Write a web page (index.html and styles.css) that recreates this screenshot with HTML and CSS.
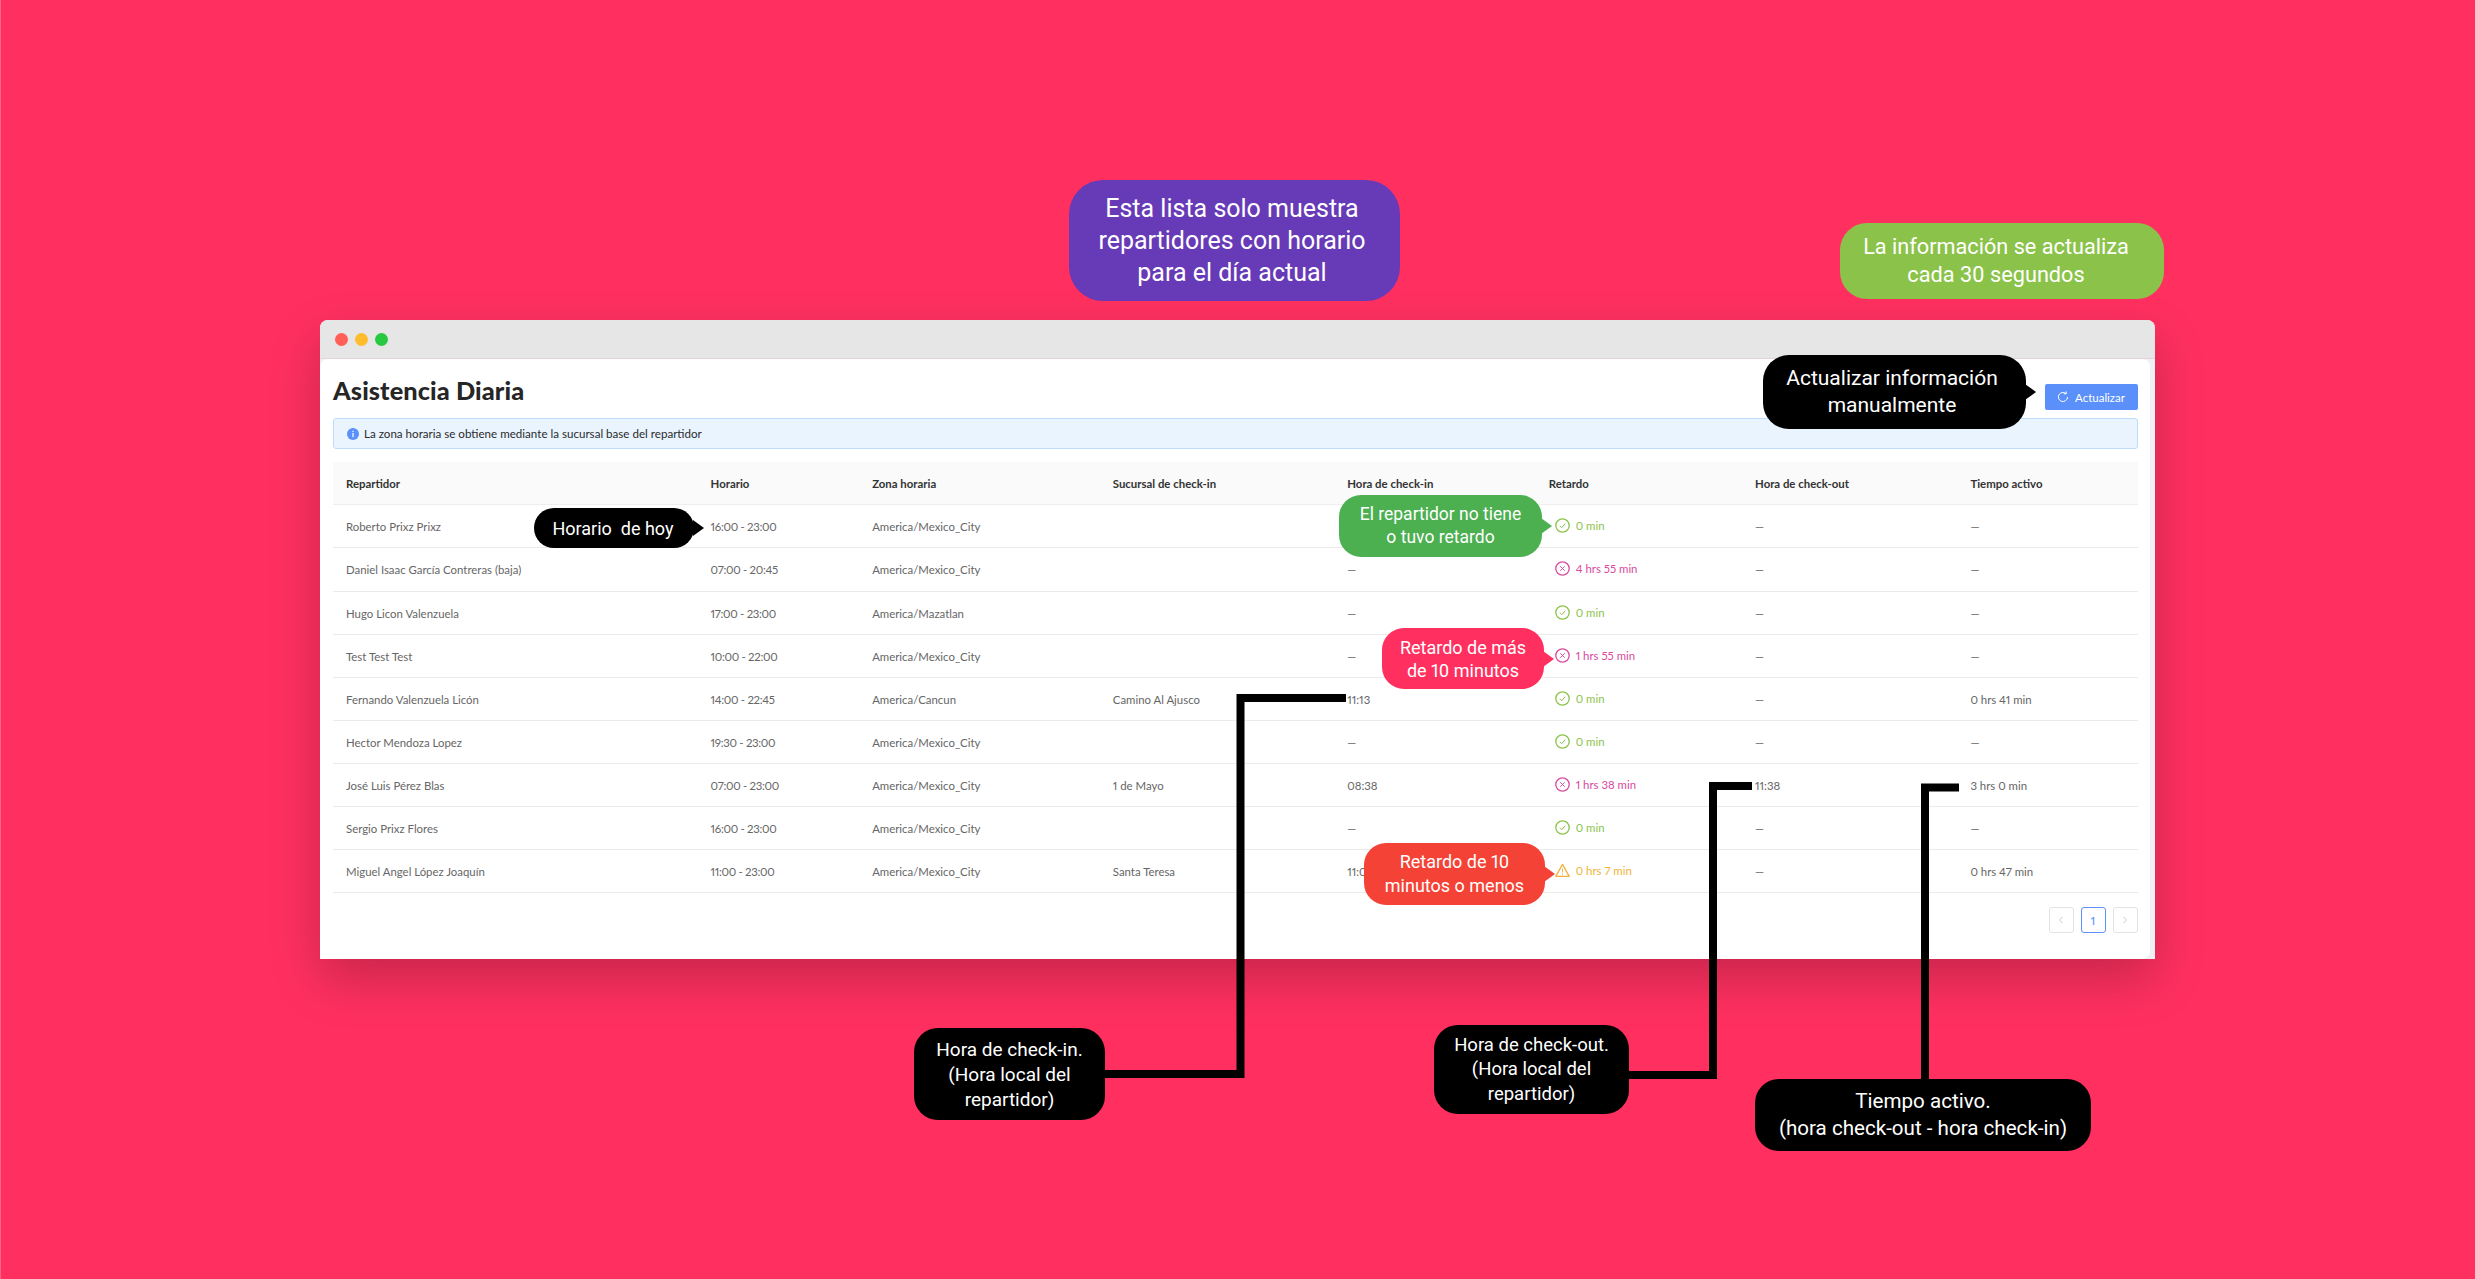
FILE: index.html
```html
<!DOCTYPE html>
<html lang="es">
<head>
  <meta charset="UTF-8">
  <meta name="viewport" content="width=device-width, initial-scale=1.0">
  <title>Asistencia Diaria</title>
  <link rel="stylesheet" href="styles.css">
</head>
<body>
  <div class="window">
    <div class="titlebar">
      <span class="dot dot-red"></span>
      <span class="dot dot-yellow"></span>
      <span class="dot dot-green"></span>
    </div>
    <main class="content">
      <header class="page-head">
        <h1>Asistencia Diaria</h1>
        <button class="refresh" type="button">
          <svg viewBox="0 0 12 12" width="12" height="12" fill="none" stroke="#fff" stroke-width="1" stroke-linecap="round"><path d="M10.6 6.4A4.6 4.6 0 1 1 8.9 2.4"/><path d="M9.2 .8v2h-2"/></svg>
          Actualizar
        </button>
      </header>
      <div class="alert">
        <svg viewBox="0 0 12 12" width="12" height="12"><circle cx="6" cy="6" r="6" fill="#5b8ff9"/><rect x="5.4" y="5" width="1.2" height="4.2" fill="#fff"/><rect x="5.4" y="2.8" width="1.2" height="1.2" fill="#fff"/></svg>
        La zona horaria se obtiene mediante la sucursal base del repartidor
      </div>
      <table class="attendance">
        <colgroup>
          <col class="c1"><col class="c2"><col class="c3"><col class="c4"><col class="c5"><col class="c6"><col class="c7"><col class="c8">
        </colgroup>
        <thead>
          <tr><th>Repartidor</th><th>Horario</th><th>Zona horaria</th><th>Sucursal de check-in</th><th>Hora de check-in</th><th>Retardo</th><th>Hora de check-out</th><th>Tiempo activo</th></tr>
        </thead>
        <tbody>
          <tr><td>Roberto Prixz Prixz</td><td>16:00 - 23:00</td><td>America/Mexico_City</td><td></td><td>—</td>
            <td><span class="late ok"><svg class="ico"><use href="#i-ok"/></svg>0 min</span></td><td>—</td><td>—</td></tr>
          <tr><td>Daniel Isaac García Contreras (baja)</td><td>07:00 - 20:45</td><td>America/Mexico_City</td><td></td><td>—</td>
            <td><span class="late bad"><svg class="ico"><use href="#i-bad"/></svg>4 hrs 55 min</span></td><td>—</td><td>—</td></tr>
          <tr><td>Hugo Licon Valenzuela</td><td>17:00 - 23:00</td><td>America/Mazatlan</td><td></td><td>—</td>
            <td><span class="late ok"><svg class="ico"><use href="#i-ok"/></svg>0 min</span></td><td>—</td><td>—</td></tr>
          <tr><td>Test Test Test</td><td>10:00 - 22:00</td><td>America/Mexico_City</td><td></td><td>—</td>
            <td><span class="late bad"><svg class="ico"><use href="#i-bad"/></svg>1 hrs 55 min</span></td><td>—</td><td>—</td></tr>
          <tr><td>Fernando Valenzuela Licón</td><td>14:00 - 22:45</td><td>America/Cancun</td><td>Camino Al Ajusco</td><td>11:13</td>
            <td><span class="late ok"><svg class="ico"><use href="#i-ok"/></svg>0 min</span></td><td>—</td><td>0 hrs 41 min</td></tr>
          <tr><td>Hector Mendoza Lopez</td><td>19:30 - 23:00</td><td>America/Mexico_City</td><td></td><td>—</td>
            <td><span class="late ok"><svg class="ico"><use href="#i-ok"/></svg>0 min</span></td><td>—</td><td>—</td></tr>
          <tr><td>José Luis Pérez Blas</td><td>07:00 - 23:00</td><td>America/Mexico_City</td><td>1 de Mayo</td><td>08:38</td>
            <td><span class="late bad"><svg class="ico"><use href="#i-bad"/></svg>1 hrs 38 min</span></td><td>11:38</td><td>3 hrs 0 min</td></tr>
          <tr><td>Sergio Prixz Flores</td><td>16:00 - 23:00</td><td>America/Mexico_City</td><td></td><td>—</td>
            <td><span class="late ok"><svg class="ico"><use href="#i-ok"/></svg>0 min</span></td><td>—</td><td>—</td></tr>
          <tr><td>Miguel Angel López Joaquín</td><td>11:00 - 23:00</td><td>America/Mexico_City</td><td>Santa Teresa</td><td>11:07</td>
            <td><span class="late warn"><svg class="ico"><use href="#i-warn"/></svg>0 hrs 7 min</span></td><td>—</td><td>0 hrs 47 min</td></tr>
        </tbody>
      </table>
      <nav class="pager">
        <span class="page-btn"><svg viewBox="0 0 10 10" width="10" height="10" fill="none" stroke="#ccc"><path d="M6.5 2 3.5 5l3 3"/></svg></span>
        <span class="page-btn current">1</span>
        <span class="page-btn"><svg viewBox="0 0 10 10" width="10" height="10" fill="none" stroke="#ccc"><path d="M3.5 2l3 3-3 3"/></svg></span>
      </nav>
    </main>
  </div>

  <!-- icons used by the Retardo column -->
  <svg class="defs" width="0" height="0">
    <symbol id="i-ok" viewBox="0 0 15 15"><circle cx="7.5" cy="7.5" r="6.7" fill="none" stroke="currentColor" stroke-width="1.3"/><path d="M4.8 7.7l2 2 3.4-4" fill="none" stroke="currentColor"/></symbol>
    <symbol id="i-bad" viewBox="0 0 15 15"><circle cx="7.5" cy="7.5" r="6.7" fill="none" stroke="currentColor" stroke-width="1.3"/><path d="M5.3 5.3l4.4 4.4M9.7 5.3l-4.4 4.4" fill="none" stroke="currentColor"/></symbol>
    <symbol id="i-warn" viewBox="0 0 15 15"><path d="M7.5 1.4 14.2 13.4H.8z" fill="none" stroke="currentColor" stroke-width="1.3" stroke-linejoin="round"/><path d="M7.5 5.6v4M7.5 10.8v1" fill="none" stroke="currentColor"/></symbol>
  </svg>

  <!-- connectors from the notes to the table -->
  <svg class="connectors" width="2475" height="1279" fill="none" stroke="#000" stroke-width="8">
    <polyline points="1104,1074 1240.5,1074 1240.5,698 1346,698"/>
    <polyline points="1629,1075 1713,1075 1713,786 1752,786"/>
    <polyline points="1925,1079 1925,787.5 1959,787.5"/>
  </svg>

  <div class="note note-list">Esta lista solo muestra<br>repartidores con horario<br>para el día actual</div>
  <div class="note note-auto">La información se actualiza<br>cada 30 segundos</div>
  <div class="note tail note-manual">Actualizar información<br>manualmente</div>
  <div class="note tail note-schedule">Horario  de hoy</div>
  <div class="note tail note-ontime">El repartidor no tiene<br>o tuvo retardo</div>
  <div class="note tail note-over">Retardo de más<br>de 10 minutos</div>
  <div class="note tail note-under">Retardo de 10<br>minutos o menos</div>
  <div class="note note-checkin">Hora de check-in.<br>(Hora local del<br>repartidor)</div>
  <div class="note note-checkout">Hora de check-out.<br>(Hora local del<br>repartidor)</div>
  <div class="note note-active">Tiempo activo.<br>(hora check-out - hora check-in)</div>
</body>
</html>
```

FILE: styles.css
```css
html, body {
  margin: 0;
  padding: 0;
}
body {
  position: relative;
  height: 1279px;
  overflow: hidden;
  box-sizing: border-box;
  padding: 320px 0 0 319px;
  border-left: 1px solid #ff6488;
  background: #ff3060;
  font-family: 'Lato', 'Noto Sans', sans-serif;
  font-variant-numeric: proportional-nums;
  color: #666;
}

/* window */
.window {
  width: 1835px;
  height: 639px;
  background: #eef0f4;
  border-radius: 8px 8px 0 0;
  box-shadow: 0 20px 50px rgba(0, 0, 0, 0.22);
  overflow: hidden;
}
.titlebar {
  display: flex;
  align-items: center;
  gap: 7px;
  height: 39px;
  padding-left: 15px;
  box-sizing: border-box;
  background: #e6e6e6;
  border-bottom: 1px solid #e8d3da;
}
.dot {
  width: 13px;
  height: 13px;
  border-radius: 50%;
}
.dot-red { background: #ff5f57; }
.dot-yellow { background: #ffbd2e; }
.dot-green { background: #28c940; }

.content {
  height: 600px;
  margin-right: 5px;
  padding: 0 12.5px 0 13px;
  box-sizing: border-box;
  background: #fff;
  border-radius: 8px 8px 8px 0;
}
.page-head {
  display: flex;
  justify-content: space-between;
  align-items: flex-start;
  height: 59px;
}
h1 {
  margin: 16px 0 0;
  font-size: 25.3px;
  line-height: 30px;
  font-weight: 900;
  letter-spacing: 0.1px;
  color: #262626;
}
.refresh {
  display: flex;
  align-items: center;
  justify-content: center;
  gap: 6px;
  width: 93px;
  height: 26px;
  margin-top: 25px;
  padding: 0;
  border: none;
  border-radius: 2px;
  background: #5b8ff9;
  color: #fff;
  font-family: inherit;
  font-size: 11.5px;
}
.alert {
  display: flex;
  align-items: center;
  gap: 5px;
  height: 31px;
  box-sizing: border-box;
  padding-left: 13px;
  border: 1px solid #bcdcfa;
  border-radius: 3px;
  background: #e9f4ff;
  font-size: 11.6px;
  color: #2b2b2b;
}

/* table */
.attendance {
  width: 100%;
  margin-top: 13px;
  border-collapse: separate;
  border-spacing: 0;
  table-layout: fixed;
  font-size: 11.4px;
}
.c1 { width: 364.5px; }
.c2 { width: 161.5px; }
.c3 { width: 240.6px; }
.c4 { width: 234.4px; }
.c5 { width: 201.4px; }
.c6 { width: 206.3px; }
.c7 { width: 215.3px; }
.c8 { width: 180px; }
.attendance th {
  box-sizing: border-box;
  height: 43px;
  padding: 0 13px;
  background: #fafafa;
  border-bottom: 1px solid #eee;
  text-align: left;
  font-weight: 700;
  color: #333;
}
.attendance td {
  box-sizing: border-box;
  height: 43px;
  padding: 0 13px;
  border-bottom: 1px solid #ebebeb;
  white-space: nowrap;
}
.attendance tr:nth-child(2) td {
  height: 44px;
}
.attendance td:nth-child(2) {
  letter-spacing: -0.3px;
}
.late {
  display: inline-flex;
  align-items: center;
  gap: 6px;
  margin-left: 6px;
}
.ico {
  width: 15px;
  height: 15px;
}
.ok { color: #8bc34a; }
.bad { color: #d94a9e; }
.warn { color: #f0b23c; }
.defs {
  position: absolute;
}

.pager {
  display: flex;
  justify-content: flex-end;
  gap: 7px;
  margin-top: 14px;
}
.page-btn {
  display: flex;
  align-items: center;
  justify-content: center;
  width: 25px;
  height: 26px;
  box-sizing: border-box;
  border: 1px solid #e3e3e3;
  border-radius: 3px;
  font-size: 12px;
}
.current {
  border-color: #5b8ff9;
  color: #5b8ff9;
}

/* notes on top of the screenshot */
.connectors {
  position: absolute;
  left: -1px;
  top: 0;
}
.note {
  position: absolute;
  display: flex;
  align-items: center;
  justify-content: center;
  box-sizing: border-box;
  text-align: center;
  white-space: pre;
  font-family: 'Roboto', sans-serif;
  color: #fff;
  background: #000;
}
.tail::after {
  content: "";
  position: absolute;
  left: 100%;
  top: 50%;
  margin-left: -1px;
  margin-top: -8px;
  border-style: solid;
  border-width: 8px 0 8px 11px;
  border-color: transparent transparent transparent var(--tail);
}
.note-list {
  left: 1068px; top: 180px; width: 331px; height: 121px;
  padding-right: 5px;
  border-radius: 34px;
  background: #673ab7;
  font-size: 25px;
  line-height: 32px;
}
.note-auto {
  left: 1839px; top: 223px; width: 324px; height: 76px;
  padding-right: 12px;
  border-radius: 27px;
  background: #8bc34a;
  font-size: 21.7px;
  line-height: 28px;
}
.note-manual {
  --tail: #000;
  left: 1762px; top: 355px; width: 263px; height: 74px;
  padding-right: 5px;
  border-radius: 26px;
  font-size: 21px;
  line-height: 27px;
}
.note-schedule {
  --tail: #000;
  left: 533px; top: 508px; width: 160px; height: 40px;
  padding-right: 2px;
  border-radius: 20px;
  font-size: 18px;
}
.note-ontime {
  --tail: #4caf50;
  left: 1338px; top: 495px; width: 203px; height: 62px;
  border-radius: 22px;
  background: #4caf50;
  font-size: 17.5px;
  line-height: 23px;
}
.note-over {
  --tail: #ff3060;
  left: 1381px; top: 628px; width: 162px; height: 61px;
  border-radius: 22px;
  background: #ff3060;
  font-size: 18px;
  line-height: 23px;
}
.note-under {
  --tail: #f44336;
  left: 1363px; top: 843px; width: 181px; height: 62px;
  border-radius: 22px;
  background: #f44336;
  font-size: 18px;
  line-height: 24px;
}
.note-checkin {
  left: 913px; top: 1028px; width: 191px; height: 92px;
  border-radius: 24px;
  font-size: 19px;
  line-height: 25px;
}
.note-checkout {
  left: 1433px; top: 1025px; width: 195px; height: 89px;
  border-radius: 24px;
  font-size: 18.5px;
  line-height: 24.5px;
}
.note-active {
  left: 1754px; top: 1079px; width: 336px; height: 72px;
  border-radius: 24px;
  font-size: 20.6px;
  line-height: 27px;
}
```
